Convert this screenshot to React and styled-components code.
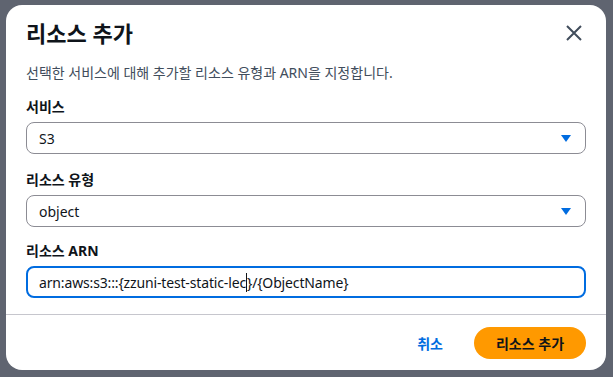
import React from "react";
import styled, { createGlobalStyle } from "styled-components";

const Global = createGlobalStyle`
  html, body { margin: 0; padding: 0; }
  body {
    background: #5f6470;
    font-family: "Noto Sans", "Noto Sans CJK KR", sans-serif;
    color: #0f141a;
  }
`;

const Page = styled.div`
  width: 613px;
  height: 377px;
  padding: 5px 0 0 6px;
  box-sizing: border-box;
`;

const Modal = styled.div`
  width: 600px;
  height: 365px;
  background: #ffffff;
  border-radius: 16px;
  display: flex;
  flex-direction: column;
  overflow: hidden;
`;

const Header = styled.div`
  display: flex;
  align-items: center;
  justify-content: space-between;
  padding: 14px 22px 0 20px;
  height: 28px;
`;

const Title = styled.h2`
  margin: 0;
  font-size: 22px;
  line-height: 28px;
  font-weight: 700;
  color: #0f141a;
`;

const CloseButton = styled.button`
  border: none;
  background: none;
  padding: 0;
  width: 20px;
  height: 20px;
  display: flex;
  align-items: center;
  justify-content: center;
  cursor: pointer;
`;

const Body = styled.div`
  padding: 16px 20px 0 20px;
  display: flex;
  flex-direction: column;
`;

const Description = styled.p`
  margin: 0 0 13px 0;
  font-size: 14px;
  line-height: 20px;
  color: #414d5c;
`;

const Field = styled.div`
  display: flex;
  flex-direction: column;
  gap: 4px;
  margin-bottom: ${(p) => p.$mb ?? 15}px;
`;

const Label = styled.label`
  font-size: 14px;
  line-height: 22px;
  font-weight: 700;
  color: #0f141a;
`;

const SelectBox = styled.div`
  height: 32px;
  box-sizing: border-box;
  border: 1px solid #8c8c94;
  border-radius: 8px;
  display: flex;
  align-items: center;
  justify-content: space-between;
  padding: 0 14px 0 12px;
  font-size: 14px;
  color: #0f141a;
`;

const InputBox = styled.div`
  height: 32px;
  box-sizing: border-box;
  border: 2px solid #006ce0;
  border-radius: 8px;
  display: flex;
  align-items: center;
  padding: 0 11px;
  font-size: 14px;
  letter-spacing: -0.15px;
  color: #0f141a;
  white-space: pre;
`;

const Caret = styled.span`
  display: inline-block;
  width: 1px;
  height: 19px;
  background: #0f141a;
`;

const Divider = styled.div`
  height: 1px;
  background: #c6c6cd;
  margin-top: 16px;
`;

const Footer = styled.div`
  display: flex;
  justify-content: flex-end;
  align-items: center;
  gap: 31px;
  padding: 12px 20px 0 20px;
`;

const LinkButton = styled.button`
  border: none;
  background: none;
  font-family: inherit;
  font-size: 14px;
  font-weight: 700;
  color: #006ce0;
  padding: 0;
  cursor: pointer;
`;

const PrimaryButton = styled.button`
  border: none;
  background: #ff9900;
  font-family: inherit;
  font-size: 14px;
  font-weight: 700;
  color: #0f141a;
  height: 32px;
  width: 112px;
  border-radius: 16px;
  cursor: pointer;
`;

const Triangle = () => (
  <svg width="10" height="7" viewBox="0 0 10 7">
    <path d="M0 0 H10 L5 7 Z" fill="#006ce0" />
  </svg>
);

export default function App() {
  return (
    <>
      <Global />
      <Page>
        <Modal>
          <Header>
            <Title>리소스 추가</Title>
            <CloseButton aria-label="닫기">
              <svg width="16" height="16" viewBox="0 0 16 16">
                <path d="M1 1 L15 15 M15 1 L1 15" stroke="#414d5c" strokeWidth="2" fill="none" />
              </svg>
            </CloseButton>
          </Header>
          <Body>
            <Description>선택한 서비스에 대해 추가할 리소스 유형과 ARN을 지정합니다.</Description>
            <Field>
              <Label>서비스</Label>
              <SelectBox>
                <span>S3</span>
                <Triangle />
              </SelectBox>
            </Field>
            <Field $mb={13}>
              <Label>리소스 유형</Label>
              <SelectBox>
                <span>object</span>
                <Triangle />
              </SelectBox>
            </Field>
            <Field $mb={0}>
              <Label>리소스 ARN</Label>
              <InputBox>
                arn:aws:s3:::{"{"}zzuni-test-static-lec<Caret />{"}"}/{"{"}ObjectName{"}"}
              </InputBox>
            </Field>
          </Body>
          <Divider />
          <Footer>
            <LinkButton>취소</LinkButton>
            <PrimaryButton>리소스 추가</PrimaryButton>
          </Footer>
        </Modal>
      </Page>
    </>
  );
}
